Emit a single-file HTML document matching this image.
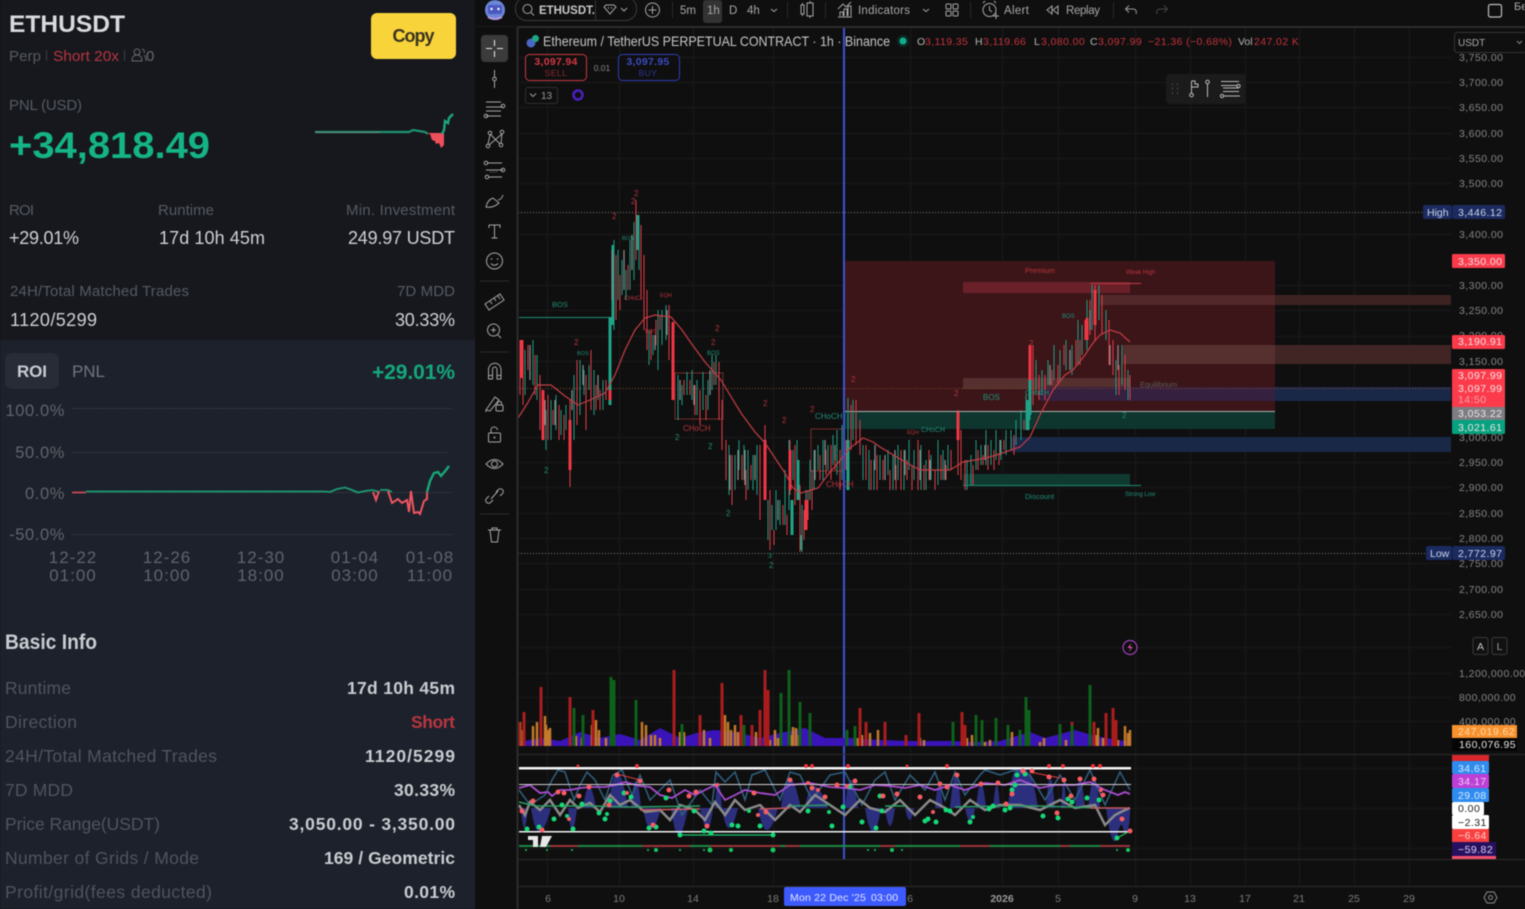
<!DOCTYPE html>
<html lang="en">
<head>
<meta charset="utf-8">
<title>ETHUSDT</title>
<style>
html,body{margin:0;padding:0;background:#0f0f0f;width:1525px;height:909px;overflow:hidden}
svg{display:block;position:absolute;left:0;top:0;filter:blur(.4px)}
text{font-family:"Liberation Sans","Noto Sans CJK SC",sans-serif}
.m{fill:#555a63;font-size:15px}
.v{fill:#cdd0d4;font-size:18px}
.lb{fill:#4f545d;font-size:17.5px}
.bv{fill:#c9ccd0;font-size:17.5px;font-weight:700;text-anchor:end}
.ax{fill:#5f646c;font-size:16.5px;text-anchor:end;letter-spacing:.6px}
.dt{fill:#5f646c;font-size:17px;text-anchor:middle;letter-spacing:1px}
.tb{fill:#a8a8a8;font-size:11.5px}
.p{fill:#858585;font-size:10.5px;letter-spacing:.45px}
.tg{fill:#f2e4e4;font-size:10.5px;letter-spacing:.45px}
.r{fill:#c4323c;font-size:10.5px;letter-spacing:.4px}
.k{fill:#b5b5b5;font-size:10.5px}
.x{fill:#7d7d7d;font-size:10.5px;text-anchor:middle}
.ic{fill:none;stroke:#a6a6a6;stroke-width:1}
.g{fill:#1f8f79}
.d{fill:#b9343d}
</style>
</head>
<body>
<svg width="1525" height="909" viewBox="0 0 1525 909" xmlns="http://www.w3.org/2000/svg">
<rect width="1525" height="909" fill="#0f0f0f"/>

<!-- LEFT PANEL -->
<rect x="0" y="0" width="475" height="340" fill="#16181d"/>
<rect x="0" y="340" width="475" height="569" fill="#1c212b"/>
<text x="9" y="32" fill="#d8dadd" font-size="24" font-weight="700" textLength="116" lengthAdjust="spacingAndGlyphs">ETHUSDT</text>
<text x="9" y="61" class="m" textLength="32">Perp</text>
<rect x="46" y="50" width="1" height="11" fill="#3a3d44"/>
<text x="53" y="61" fill="#b93540" font-size="15" textLength="66" lengthAdjust="spacingAndGlyphs">Short 20x</text>
<rect x="124" y="50" width="1" height="11" fill="#3a3d44"/>
<circle cx="137" cy="52" r="3" fill="none" stroke="#666a72"/>
<path d="M132 61c0-4 2-6 5-6s5 2 5 6zM142 49c2 .5 3 2 2 4M144 55c1.500 1 2 3 2 6" fill="none" stroke="#666a72"/>
<text x="146" y="61" class="m" style="fill:#666a72">0</text>
<rect x="371" y="13" width="85" height="46" rx="6" fill="#f8d33a"/>
<text x="413.500" y="42" fill="#3a3320" font-size="18" font-weight="700" text-anchor="middle" textLength="42">Copy</text>

<text x="9" y="110" class="m" textLength="73">PNL (USD)</text>
<text x="9" y="158" fill="#14b486" font-size="37" font-weight="700" textLength="201" lengthAdjust="spacingAndGlyphs">+34,818.49</text>
<path d="M315 132H409L413 130L419 131L425 132L428 134" fill="none" stroke="#1d9470" stroke-width="2.200"/>
<path d="M315 132.500H380" fill="none" stroke="#888" stroke-width=".8"/>
<path d="M426 133L430 134L432 140L435 141L436 144L439 143L441 148L444 145V133z" fill="#ef4f5a"/>
<path d="M442 134L444 130L445 121L448 123L449 118L453 114" fill="none" stroke="#1da67d" stroke-width="2.400"/>

<text x="9" y="215" class="m" textLength="25">ROI</text>
<text x="158" y="215" class="m" textLength="56">Runtime</text>
<text x="455" y="215" class="m" text-anchor="end" textLength="109">Min. Investment</text>
<text x="9" y="244" class="v" textLength="70">+29.01%</text>
<text x="159" y="244" class="v" textLength="106">17d 10h 45m</text>
<text x="455" y="244" class="v" text-anchor="end" textLength="107">249.97 USDT</text>
<text x="10" y="296" class="m" textLength="179">24H/Total Matched Trades</text>
<text x="455" y="296" class="m" text-anchor="end" textLength="58">7D MDD</text>
<text x="10" y="326" class="v" textLength="87">1120/5299</text>
<text x="455" y="326" class="v" text-anchor="end" textLength="60">30.33%</text>

<rect x="5" y="353" width="54" height="36" rx="7" fill="#272c36"/>
<text x="17" y="377" fill="#c8ccd2" font-size="17" font-weight="700" textLength="30">ROI</text>
<text x="72" y="377" fill="#70757e" font-size="17" textLength="33">PNL</text>
<text x="455" y="379" fill="#14a87c" font-size="21" font-weight="700" text-anchor="end" textLength="83">+29.01%</text>

<g stroke="#353a44" stroke-width="1" stroke-dasharray="2 1">
<path d="M72 408.500H452M72 452.500H448M72 492.500H452M72 534.500H452"/>
</g>
<text class="ax" x="65" y="416">100.0%</text>
<text class="ax" x="65" y="458">50.0%</text>
<text class="ax" x="65" y="499">0.0%</text>
<text class="ax" x="65" y="540">-50.0%</text>
<text class="dt" x="73" y="563">12-22</text><text class="dt" x="73" y="581">01:00</text>
<text class="dt" x="167" y="563">12-26</text><text class="dt" x="167" y="581">10:00</text>
<text class="dt" x="261" y="563">12-30</text><text class="dt" x="261" y="581">18:00</text>
<text class="dt" x="355" y="563">01-04</text><text class="dt" x="355" y="581">03:00</text>
<text class="dt" x="430" y="563">01-08</text><text class="dt" x="430" y="581">11:00</text>
<path d="M72 492.500H86" stroke="#d8505a" stroke-width="1.600" fill="none"/>
<path d="M86 491.500H325L330 492L337 489L345 487.500L352 490L358 492.500L365 491L372 490L378 491.500M380 490L388 490L392 492" fill="none" stroke="#1d9a74" stroke-width="1.800"/>
<path d="M373 492L376 500L379 491M388 491L392 503L398 499L402 503L407 500L409 512L411 491L414 513L418 512L420 514L424 501L427 499V492" fill="none" stroke="#ee5560" stroke-width="2"/>
<path d="M427 492L430 481L434 473L438 472L441 476L446 470L449 466" fill="none" stroke="#1aa679" stroke-width="2.400"/>

<text x="5" y="649" fill="#c9cdd2" font-size="21" font-weight="700" textLength="92" lengthAdjust="spacingAndGlyphs">Basic Info</text>
<text class="lb" x="5" y="694" textLength="66">Runtime</text>
<text class="lb" x="5" y="728" textLength="72">Direction</text>
<text class="lb" x="5" y="762" textLength="212">24H/Total Matched Trades</text>
<text class="lb" x="5" y="796" textLength="68">7D MDD</text>
<text class="lb" x="5" y="830" textLength="155">Price Range(USDT)</text>
<text class="lb" x="5" y="864" textLength="194">Number of Grids / Mode</text>
<text class="lb" x="5" y="898" textLength="207">Profit/grid(fees deducted)</text>
<text class="bv" x="455" y="694" textLength="108">17d 10h 45m</text>
<text class="bv" x="455" y="728" style="fill:#b93540" textLength="44">Short</text>
<text class="bv" x="455" y="762" textLength="90">1120/5299</text>
<text class="bv" x="455" y="796" textLength="61">30.33%</text>
<text class="bv" x="455" y="830" textLength="166">3,050.00 - 3,350.00</text>
<text class="bv" x="455" y="864" textLength="131">169 / Geometric</text>
<text class="bv" x="455" y="898" textLength="51">0.01%</text>

<!-- GRID -->
<g stroke="#1a1a1a" stroke-width="1" fill="none">
<path d="M547.500 28V886M619.500 28V886M693.500 28V886M773.500 28V886M910.500 28V886M1002.500 28V886M1058.500 28V886M1135.500 28V886M1190.500 28V886M1245.500 28V886M1299.500 28V886M1354.500 28V886M1409.500 28V886"/>
<path d="M518 57.500H1451M518 82.500H1451M518 107.500H1451M518 133.500H1451M518 158.500H1451M518 183.500H1451M518 234.500H1451M518 285.500H1451M518 310.500H1451M518 336.500H1451M518 361.500H1451M518 437.500H1451M518 462.500H1451M518 487.500H1451M518 513.500H1451M518 538.500H1451M518 563.500H1451M518 589.500H1451M518 614.500H1451M518 647.500H1451M518 673.500H1451M518 697.500H1451M518 721.500H1451M518 768.500H1451M518 808.500H1451M518 848.500H1451"/>
</g>

<!-- ZONES -->
<rect x="844" y="261" width="431" height="151" fill="#3b1518"/>
<rect x="844" y="412" width="431" height="17" fill="#0e352e"/>
<rect x="963" y="282" width="167" height="11" fill="#6a2029"/>
<rect x="1100" y="295" width="175" height="10" fill="#53282a"/>
<rect x="1275" y="295" width="176" height="10" fill="#3d2222"/>
<rect x="1123" y="345" width="152" height="19" fill="#56302f"/>
<rect x="1275" y="345" width="176" height="19" fill="#402524"/>
<rect x="963" y="378" width="167" height="11" fill="#55302f"/>
<rect x="1040" y="387" width="235" height="14" fill="#35203f"/>
<rect x="1275" y="387" width="176" height="14" fill="#1a2848"/>
<rect x="1011" y="437" width="440" height="15" fill="#1a2848"/>
<rect x="963" y="474" width="167" height="11" fill="#103a30"/>
<path d="M844 411.500H1275" stroke="#a6b4b0" stroke-width="1"/>
<path d="M1090 283.500H1141" stroke="#c93a44" stroke-width="1"/>
<path d="M963 485.500H1141" stroke="#1c8f78" stroke-width="1"/>
<path d="M518 212.500H1423M518 553.500H1427" stroke="#777" stroke-width="1" stroke-dasharray="1 2"/>
<path d="M518 388.500H1451" stroke="#8c4a30" stroke-width="1" stroke-dasharray="1 2"/>
<path d="M519 317.500H610" stroke="#1c8f78" stroke-width="1"/>
<rect x="675" y="373" width="48" height="46" fill="none" stroke="#a33a3f" stroke-width=".7"/>
<rect x="811" y="429" width="33" height="42" fill="none" stroke="#a33a3f" stroke-width=".7"/>

<!-- CANDLES teal -->
<path fill="none" stroke="#1f9c82" stroke-width="1" d="M525 350V395M533 340V385M537 355V400M542 395V420M546 410V450M551 400V440M556 395V430M561 410V435M566 405V430M574 375V440M580 360V415M584 370V395M589 365V390M594 370V415M598 375V400M603 380V410M614 240V330M618 250V300M622 260V295M626 270V300M630 240V290M634 222V280M639 215V270M649 330V365M653 335V355M658 310V370M662 310V345M666 305V340M678 375V420M682 385V405M687 372V395M692 370V400M697 380V415M703 372V410M708 380V410M712 355V390M716 355V385M729 445V495M735 455V490M739 440V470M744 445V480M748 450V490M753 455V490M757 445V495M768 500V540M772 505V530M776 490V530M780 500V525M785 470V525M789 440V510M793 450V480M797 440V500M802 505V552M806 490V530M810 460V500M814 450V490M818 445V470M823 440V480M828 445V470M833 435V465M837 430V475M842 425V480M848 398V445M853 400V440M863 445V480M869 450V490M874 460V490M880 455V480M888 450V475M893 455V490M898 445V480M904 450V490M909 440V470M914 450V480M921 445V490M926 460V490M931 455V480M938 440V485M943 450V480M948 445V470M967 460V490M971 455V485M976 440V470M981 445V465M986 430V465M991 440V465M996 430V460M1001 440V460M1006 430V455M1011 430V450M1016 420V445M1021 410V440M1026 395V430M1030 368V420M1036 360V395M1042 370V395M1048 360V385M1054 345V380M1060 350V380M1066 340V370M1072 345V375M1078 320V365M1082 325V355M1087 300V350M1092 285V330M1099 285V320M1106 310V340M1116 360V395M1122 345V385M1128 370V400"/>
<path fill="none" stroke="#1fa387" stroke-width="3" d="M610 317V405M613 245V325M637 215V250M792 500V535M848 440V490M1028 400V430M1030 380V415M798 460V500M801 535V550"/>
<!-- CANDLES red -->
<path fill="none" stroke="#e23b49" stroke-width="1" d="M520 340V395M523 360V405M528 345V370M535 355V395M540 375V430M548 395V440M553 410V425M559 405V440M564 415V440M570 400V487M577 360V425M586 375V430M591 350V410M596 385V410M600 390V410M606 380V400M616 255V320M620 275V310M628 265V290M636 200V260M641 225V300M644 255V330M647 290V350M651 330V360M656 320V345M660 315V330M669 305V360M672 330V370M684 380V395M690 380V395M695 385V415M700 390V425M706 395V420M714 362V385M719 362V420M722 400V450M726 440V480M732 455V505M742 455V480M746 470V500M751 465V480M760 445V520M765 425V470M770 490V550M774 530V545M783 505V525M787 515V535M790 440V495M795 445V505M800 485V552M804 510V540M808 490V520M812 470V510M820 455V480M826 450V475M831 445V480M835 445V470M840 450V490M846 440V470M851 405V450M856 400V445M860 420V455M866 445V480M871 460V490M877 455V490M883 460V480M890 470V490M896 465V490M901 450V490M907 460V480M912 465V490M918 440V490M924 465V490M929 450V480M935 470V490M941 455V480M946 465V480M951 450V470M958 410V475M961 430V480M965 460V490M973 465V485M978 450V470M983 455V465M988 445V470M994 450V470M999 455V465M1004 440V450M1014 435V455M1024 420V430M1033 345V405M1039 375V400M1045 375V400M1052 370V385M1058 365V385M1064 345V365M1070 355V365M1076 340V365M1080 340V365M1085 320V340M1090 300V335M1095 285V340M1102 295V335M1109 320V365M1113 340V375M1119 365V395M1125 355V390M1130 375V400"/>
<path fill="none" stroke="#f23645" stroke-width="3" d="M673 322V400M610 390V400M522 340V378M543 390V440M570 420V470M765 440V500M790 450V490M806 500V530M958 412V440M1095 290V325M1030 345V380M1087 318V340"/>
<!-- grey candles -->
<path fill="none" stroke="#8e8e8e" stroke-width="1.200" d="M530 345V380M545 400V425M555 400V425M572 390V410M583 365V385M598 375V395M612 250V300M624 250V290M632 235V270M655 335V350M667 310V335M680 380V400M694 385V405M710 370V395M730 455V490M738 450V480M745 450V485M755 455V480M778 500V520M815 450V480M825 440V465M835 445V460M875 445V470M885 455V480M895 450V480M905 450V475M920 450V480M930 460V480M945 460V480M985 445V460M1000 440V455M1050 365V385M1070 350V370M1090 310V330M1110 345V365M1118 345V370"/>
<!-- MA -->
<path fill="none" stroke="#c63d46" stroke-width="1.200" d="M518 418L527 404L538 385L551 385L565 396L578 405L590 400L605 393L615 375L625 350L635 330L645 318L655 315L671 317L682 330L691 343L705 362L721 380L730 395L741 413L755 432L765 443L775 458L785 473L793 488L801 493L818 488L830 472L838 463L850 448L863 438L873 442L880 447L895 456L907 463L920 470L930 470L950 470L963 462L975 460L990 457L1005 452L1020 447L1030 437L1040 415L1053 390L1065 375L1073 370L1085 355L1093 343L1100 335L1110 330L1120 333L1130 342"/>

<!-- chart labels -->
<g font-size="7" class="g">
<text x="552" y="307" font-size="7.500">BOS</text><text x="815" y="419" font-size="8">CHoCH</text><text x="921" y="432" font-size="7">CHoCH</text><text x="983" y="400" font-size="8">BOS</text>
<text x="1025" y="499" font-size="7.500">Discount</text><text x="1125" y="496" font-size="6">Strong Low</text>
<text x="544" y="473" font-size="8">2</text><text x="675" y="440" font-size="8">2</text><text x="708" y="449" font-size="8">2</text><text x="726" y="516" font-size="8">2</text><text x="768" y="558" font-size="7">3</text><text x="769" y="568" font-size="8">2</text><text x="1122" y="418" font-size="8">2</text><text x="1025" y="395" font-size="7">CHoCH</text><text x="1062" y="318" font-size="6">BOS</text>
<text x="622" y="240" font-size="5.500">BOS</text><text x="707" y="355" font-size="6">BOS</text><text x="577" y="355" font-size="5.500">BOS</text>
</g>
<g class="d" font-size="7">
<text x="1025" y="273" font-size="7.500">Premium</text><text x="1126" y="274" font-size="6">Weak High</text>
<text x="683" y="431" font-size="8">CHoCH</text><text x="826" y="487" font-size="8">CHoCH</text>
<text x="612" y="219" font-size="8">2</text><text x="631" y="204" font-size="8">2</text><text x="634" y="196" font-size="8">2</text><text x="574" y="345" font-size="8">2</text><text x="715" y="331" font-size="8">2</text><text x="711" y="345" font-size="8">2</text><text x="763" y="406" font-size="8">2</text><text x="782" y="423" font-size="8">2</text><text x="810" y="412" font-size="8">2</text><text x="851" y="382" font-size="8">2</text><text x="954" y="396" font-size="8">2</text><text x="1029" y="346" font-size="8">2</text><text x="624" y="300" font-size="6">CHoCH</text><text x="660" y="297" font-size="5.500">EQH</text><text x="907" y="434" font-size="5.500">EQH</text><text x="645" y="333" font-size="5.500">BOS</text>
</g>
<text x="1140" y="387" fill="#5e5e5e" font-size="7.500">Equilibrium</text>

<!-- crosshair -->
<rect x="843" y="27" width="2" height="832" fill="#3d52d5"/>

<!-- volume -->
<path fill="#3a14b8" d="M519 746V742L540 738L560 741L580 732L600 738L620 734L640 740L660 728L680 738L700 732L715 730L740 733L760 738L780 733L805 728L825 738L850 738L880 740L910 741L950 741L975 742L1000 741L1030 732L1045 738L1075 730L1095 736L1130 742V746Z"/>
<path fill="none" stroke="#c47a28" stroke-width="2.500" d="M520 746V722M523 746V730M533 746V726M537 746V722M545 746V716M548 746V730M546 746V725M550 746V728M576 746V736M582 746V738M592 746V725M596 746V720M599 746V730M606 746V738M642 746V722M646 746V725M651 746V735M655 746V735M660 746V738M680 746V732M682 746V738M684 746V732M700 746V735M704 746V730M710 746V738M725 746V715M728 746V722M731 746V730M735 746V725M738 746V732M756 746V732M760 746V736M767 746V730M770 746V740M775 746V730M778 746V738M792 746V735M793 746V727M796 746V728M799 746V735M855 746V740M858 746V738M862 746V735M870 746V733M878 746V730M885 746V742M920 746V738M924 746V740M964 746V730M967 746V738M972 746V735M985 746V742M990 746V740M1012 746V732M1040 746V742M1044 746V738M1060 746V738M1066 746V740M1096 746V735M1098 746V728M1103 746V738M1116 746V730M1118 746V740M1125 746V726M1128 746V733M1130 746V730"/>
<path fill="none" stroke="#aa1c1c" stroke-width="3" d="M519 746V722M524 746V712M541 746V687M570 746V697M593 746V710M674 746V670M700 746V715M722 746V683M752 746V725M765 746V670M768 746V690M741 746V715M760 746V710M860 746V708M866 746V722M885 746V722M906 746V735M919 746V713M962 746V712M965 746V725M1072 746V722M1094 746V722M1106 746V713M1113 746V708M1116 746V720"/>
<path fill="none" stroke="#0e611b" stroke-width="3" d="M611 746V677M614 746V680M636 746V700M574 746V708M583 746V715M682 746V724M744 746V725M781 746V693M789 746V670M800 746V702M810 746V713M847 746V730M855 746V726M953 746V722M976 746V715M982 746V720M996 746V718M1008 746V725M1020 746V730M1026 746V697M1029 746V710M1060 746V724M1072 746V725M1090 746V685"/>
<path d="M518 754.500H1525M518 859.500H1525M518 886.500H1525" stroke="#2c2c2c" fill="none"/>

<!-- oscillator -->
<path fill="#2b2f7e" d="M521 808Q524 848 528 808ZM531 808Q538 856 551 808ZM568 808Q572 852 577 808ZM583 808Q589 766 596 808ZM608 808Q617 738 628 808ZM631 808Q636 752 641 808ZM643 808Q650 850 661 808ZM671 808Q678 862 688 808ZM700 808Q708 850 713 808ZM715 808Q718 756 722 808ZM722 808Q728 848 738 808ZM758 808Q766 852 778 808ZM781 808Q788 748 801 808ZM805 808Q812 764 828 808ZM845 808Q850 752 858 808ZM865 808Q873 856 881 808ZM885 808Q890 844 895 808ZM905 808Q910 832 914 808ZM935 808Q939 762 943 808ZM950 808Q956 742 961 808ZM965 808Q971 836 975 808ZM976 808Q981 758 986 808ZM993 808Q997 762 1000 808ZM1008 808Q1012 762 1020 768Q1032 764 1038 808ZM1046 808Q1050 748 1055 808ZM1061 808Q1064 756 1066 808ZM1075 808Q1080 752 1085 808ZM1088 808Q1094 752 1100 808ZM1106 808Q1112 852 1117 838Q1121 815 1124 832Q1130 835 1130 808Z"/>
<path fill="none" stroke="#305f80" stroke-width="1.500" d="M519 790L530 805L545 795L552 780L558 770L565 772L574 800L580 785L587 772L595 780L605 800L613 775L622 770L632 795L640 775L650 800L660 790L670 780L682 815L700 790L712 805L716 772L725 782L735 772L745 800L752 775L765 770L780 800L790 772L800 775L812 800L830 775L845 772L862 805L875 780L885 772L895 800L910 775L925 790L935 772L945 800L955 772L965 795L980 775L985 770L1000 775L1015 770L1030 775L1045 800L1060 775L1075 800L1090 770L1105 805L1120 772L1130 790"/>
<path fill="none" stroke="#8a8a8a" stroke-width="2.500" d="M519 805L525 815L530 802L540 810L550 800L560 815L570 800L578 808L590 803L600 812L610 795L620 805L630 800L645 812L660 810L670 820L680 805L695 810L705 820L715 802L725 815L735 800L745 810L760 805L775 820L790 805L800 812L815 795L830 805L845 815L860 800L870 808L885 812L900 800L915 815L930 800L945 808L955 815L970 800L985 810L1000 805L1020 805L1040 810L1060 800L1075 808L1095 805L1105 825L1115 815L1125 810L1130 808"/>
<path fill="none" stroke="#2b9c63" stroke-width="1.500" d="M519 802L535 806L560 806L590 806L630 807L700 806M790 806L830 805M885 806L905 806M955 807L1000 806L1040 806L1100 808"/>
<path fill="none" stroke="#c65a5e" stroke-width="1.500" d="M640 810L700 809M760 809L790 808M1090 808L1130 808"/>
<path fill="none" stroke="#a84cd0" stroke-width="1.800" d="M519 788L530 785L540 793L548 792L552 796L560 790L570 790L580 788L590 787L605 787L615 785L625 782L640 786L650 787L660 795L672 798L685 790L695 795L705 790L715 785L725 800L735 795L745 790L760 793L775 795L790 785L810 783L830 787L845 788L860 790L875 785L890 786L905 788L920 785L935 790L950 785L965 790L985 783L1005 785L1020 780L1040 788L1055 785L1075 785L1090 782L1105 790L1118 795L1125 792L1130 794"/>
<rect x="519" y="767" width="612" height="2.500" fill="#f5f5f5"/>
<rect x="519" y="784" width="612" height="1" fill="#cfcfcf"/>
<rect x="519" y="831" width="612" height="1.500" fill="#f0f0f0"/>
<path d="M519 846H550M578 846H642M690 846H710M780 846H785M800 846H880M895 846H960M990 846H1060M1070 846H1100" stroke="#1b8a43" stroke-width="2"/>
<path d="M550 846H578M642 846H690M710 846H780M785 846H800M880 846H895M960 846H990M1060 846H1070M1100 846H1130" stroke="#9c3338" stroke-width="2"/>
<path d="M617 774L640 780M1030 772L1060 778" stroke="#e43d44" fill="none" stroke-width="1"/>
<path d="M680 835L773 835M1117 838L1130 831" stroke="#1fc56f" fill="none" stroke-width="1.200"/>
<!-- oscillator dots -->
<g fill="#16d977">
<circle cx="527" cy="829" r="2.500"/><circle cx="539" cy="827" r="2.500"/><circle cx="554" cy="819" r="2.500"/><circle cx="562" cy="805" r="2.500"/><circle cx="567" cy="816" r="2"/><circle cx="573" cy="829" r="2.500"/><circle cx="582" cy="804" r="2.500"/><circle cx="599" cy="813" r="2.500"/><circle cx="605" cy="819" r="2.500"/><circle cx="607" cy="814" r="2"/><circle cx="610" cy="801" r="2.500"/><circle cx="624" cy="793" r="2.500"/><circle cx="631" cy="797" r="2.500"/><circle cx="649" cy="828" r="2.500"/><circle cx="656" cy="827" r="2.500"/><circle cx="666" cy="798" r="2.500"/><circle cx="680" cy="835" r="2.500"/><circle cx="694" cy="811" r="2.500"/><circle cx="704" cy="831" r="2.500"/><circle cx="711" cy="833" r="2.500"/><circle cx="732" cy="825" r="2.500"/><circle cx="738" cy="826" r="2.500"/><circle cx="749" cy="811" r="2"/><circle cx="760" cy="826" r="2.500"/><circle cx="773" cy="835" r="2.500"/><circle cx="808" cy="811" r="2.500"/><circle cx="850" cy="787" r="2"/><circle cx="880" cy="796" r="2.500"/><circle cx="882" cy="811" r="2.500"/><circle cx="829" cy="812" r="2"/><circle cx="832" cy="826" r="2.500"/><circle cx="843" cy="807" r="2.500"/><circle cx="862" cy="822" r="2.500"/><circle cx="876" cy="828" r="2.500"/><circle cx="925" cy="821" r="2.500"/><circle cx="928" cy="819" r="2.500"/><circle cx="936" cy="822" r="2.500"/><circle cx="946" cy="810" r="2.500"/><circle cx="950" cy="811" r="2.500"/><circle cx="970" cy="822" r="2.500"/><circle cx="973" cy="817" r="2"/><circle cx="989" cy="809" r="2.500"/><circle cx="993" cy="806" r="2.500"/><circle cx="1005" cy="810" r="2.500"/><circle cx="1010" cy="808" r="2.500"/><circle cx="1012" cy="790" r="2.500"/><circle cx="1015" cy="785" r="2.500"/><circle cx="1017" cy="775" r="2.500"/><circle cx="1025" cy="774" r="2.500"/><circle cx="1043" cy="816" r="2.500"/><circle cx="1058" cy="818" r="2.500"/><circle cx="1068" cy="799" r="2.500"/><circle cx="1072" cy="802" r="2.500"/><circle cx="1087" cy="798" r="2.500"/><circle cx="1099" cy="800" r="2.500"/><circle cx="1117" cy="838" r="2.500"/>
</g>
<g fill="#f85c63">
<circle cx="522" cy="811" r="2.500"/><circle cx="533" cy="801" r="2.500"/><circle cx="542" cy="830" r="2.500"/><circle cx="558" cy="792" r="2.500"/><circle cx="564" cy="793" r="2.500"/><circle cx="569" cy="819" r="2"/><circle cx="579" cy="796" r="2.500"/><circle cx="589" cy="787" r="2.500"/><circle cx="609" cy="805" r="2.500"/><circle cx="617" cy="775" r="2.500"/><circle cx="627" cy="793" r="2"/><circle cx="640" cy="781" r="2.500"/><circle cx="653" cy="825" r="2.500"/><circle cx="669" cy="790" r="2.500"/><circle cx="689" cy="796" r="2.500"/><circle cx="696" cy="792" r="2.500"/><circle cx="707" cy="826" r="2.500"/><circle cx="717" cy="785" r="2"/><circle cx="754" cy="793" r="2.500"/><circle cx="758" cy="815" r="2"/><circle cx="766" cy="812" r="2.500"/><circle cx="790" cy="780" r="2.500"/><circle cx="808" cy="783" r="2"/><circle cx="812" cy="788" r="2.500"/><circle cx="818" cy="790" r="2"/><circle cx="825" cy="797" r="2.500"/><circle cx="837" cy="785" r="2.500"/><circle cx="847" cy="786" r="2"/><circle cx="855" cy="781" r="2.500"/><circle cx="883" cy="796" r="2.500"/><circle cx="897" cy="794" r="2.500"/><circle cx="920" cy="797" r="2.500"/><circle cx="933" cy="812" r="2"/><circle cx="940" cy="784" r="2.500"/><circle cx="947" cy="787" r="2.500"/><circle cx="957" cy="775" r="2.500"/><circle cx="981" cy="784" r="2.500"/><circle cx="998" cy="783" r="2.500"/><circle cx="1012" cy="794" r="2.500"/><circle cx="1006" cy="804" r="2.500"/><circle cx="1023" cy="771" r="2.500"/><circle cx="1032" cy="771" r="2.500"/><circle cx="1049" cy="777" r="2.500"/><circle cx="1064" cy="780" r="2.500"/><circle cx="1080" cy="779" r="2.500"/><circle cx="1094" cy="779" r="2.500"/><circle cx="1101" cy="790" r="2"/><circle cx="1103" cy="795" r="2.500"/><circle cx="1071" cy="796" r="2.500"/><circle cx="1057" cy="813" r="2.500"/><circle cx="1122" cy="819" r="2.500"/><circle cx="1130" cy="831" r="2.500"/>
</g>
<g fill="#f03238">
<circle cx="578" cy="766" r="1.500"/><circle cx="637" cy="766" r="2"/><circle cx="806" cy="766" r="2"/><circle cx="812" cy="766" r="2"/><circle cx="848" cy="766" r="2"/><circle cx="907" cy="766" r="1.500"/><circle cx="947" cy="766" r="2"/><circle cx="1049" cy="766" r="2"/><circle cx="1063" cy="766" r="2"/><circle cx="1093" cy="766" r="2"/><circle cx="1100" cy="766" r="2"/>
</g>
<g fill="#14c85f">
<circle cx="526" cy="850" r="1"/><circle cx="547" cy="850" r="1"/><circle cx="572" cy="850" r="1"/><circle cx="648" cy="850" r="1"/><circle cx="656" cy="850" r="2"/><circle cx="680" cy="850" r="1"/><circle cx="704" cy="850" r="1"/><circle cx="710" cy="850" r="2.500"/><circle cx="731" cy="850" r="2"/><circle cx="773" cy="850" r="2.500"/><circle cx="868" cy="850" r="1"/><circle cx="875" cy="850" r="1"/><circle cx="892" cy="850" r="2"/><circle cx="902" cy="850" r="1"/><circle cx="1117" cy="850" r="1"/><circle cx="1128" cy="850" r="2"/>
</g>
<!-- TV logo -->
<path fill="#e8e8e8" d="M528 836H538V847H533V840H528ZM542 836H552L546 847H540Z"/>

<!-- Right axis -->
<rect x="1451" y="28" width="74" height="726" fill="#0f0f0f"/>
<rect x="1451" y="755" width="74" height="104" fill="#0f0f0f"/>
<rect x="1451" y="860" width="74" height="26" fill="#0f0f0f"/>
<text class="p" x="1459" y="61">3,750.00</text><text class="p" x="1459" y="86">3,700.00</text><text class="p" x="1459" y="111">3,650.00</text><text class="p" x="1459" y="137">3,600.00</text><text class="p" x="1459" y="162">3,550.00</text><text class="p" x="1459" y="187">3,500.00</text><text class="p" x="1459" y="238">3,400.00</text><text class="p" x="1459" y="289">3,300.00</text><text class="p" x="1459" y="314">3,250.00</text><text class="p" x="1459" y="339">3,200.00</text><text class="p" x="1459" y="365">3,150.00</text><text class="p" x="1459" y="441">3,000.00</text><text class="p" x="1459" y="466">2,950.00</text><text class="p" x="1459" y="491">2,900.00</text><text class="p" x="1459" y="517">2,850.00</text><text class="p" x="1459" y="542">2,800.00</text><text class="p" x="1459" y="567">2,750.00</text><text class="p" x="1459" y="593">2,700.00</text><text class="p" x="1459" y="618">2,650.00</text>
<text class="p" x="1459" y="677">1,200,000.00</text><text class="p" x="1459" y="701">800,000.00</text><text class="p" x="1459" y="725">400,000.00</text>
<rect x="1423" y="205" width="29" height="14" rx="2" fill="#1b2b60"/><rect x="1452.500" y="205" width="52.500" height="14" rx="2" fill="#1b2b60"/>
<text x="1427" y="216" fill="#ccd4ea" font-size="10.500">High</text><text x="1458" y="216" fill="#ccd4ea" font-size="10.500" letter-spacing=".45">3,446.12</text>
<rect x="1426" y="546" width="26" height="14" rx="2" fill="#1b2b60"/><rect x="1452.500" y="546" width="52.500" height="14" rx="2" fill="#1b2b60"/>
<text x="1430" y="557" fill="#ccd4ea" font-size="10.500">Low</text><text x="1458" y="557" fill="#ccd4ea" font-size="10.500" letter-spacing=".45">2,772.97</text>
<g fill="#fb3b4c">
<rect x="1452" y="254" width="53" height="14" rx="1.500"/><rect x="1452" y="335" width="53" height="14" rx="1.500"/><rect x="1452" y="369" width="53" height="39" rx="1.500"/>
</g>
<rect x="1452" y="407" width="53" height="14" fill="#7c7e84"/>
<rect x="1452" y="420" width="53" height="14" rx="1.500" fill="#06a27f"/>
<text class="tg" x="1458" y="265">3,350.00</text><text class="tg" x="1458" y="345">3,190.91</text><text class="tg" x="1458" y="379">3,097.99</text><text class="tg" x="1458" y="392">3,097.99</text><text x="1458" y="403" fill="#f4a3aa" font-size="10.500" letter-spacing=".45">14:50</text><text class="tg" x="1458" y="417">3,053.22</text><text class="tg" x="1458" y="431">3,021.61</text>
<rect x="1473" y="637.500" width="15" height="17" rx="2" fill="#111" stroke="#3a3a3a"/><rect x="1492" y="637.500" width="15" height="17" rx="2" fill="#111" stroke="#3a3a3a"/>
<text x="1480.500" y="650" fill="#c4c4c4" font-size="10.500" text-anchor="middle">A</text><text x="1499.500" y="650" fill="#9a9a9a" font-size="10.500" text-anchor="middle">L</text>

<rect x="1452" y="725" width="65" height="13" fill="#f8922e"/><rect x="1452" y="738" width="65" height="13" fill="#050505"/>
<text x="1458" y="735" fill="#ffd9a8" font-size="10.500" letter-spacing=".45">247,019.62</text><text x="1459" y="748" fill="#e4e4e4" font-size="10.500" letter-spacing=".45">160,076.95</text>
<rect x="1452" y="755" width="37" height="6" fill="#d8262c"/>
<rect x="1452" y="761" width="37" height="13" rx="1.500" fill="#2f8cef"/><rect x="1452" y="774" width="37" height="14" rx="1.500" fill="#bd3fd6"/><rect x="1452" y="788" width="37" height="14" rx="1.500" fill="#2f8cef"/>
<rect x="1452" y="802" width="32" height="13" rx="1.500" fill="#fff"/><rect x="1452" y="815" width="37" height="14" rx="1.500" fill="#fff"/>
<rect x="1452" y="829" width="37" height="13" fill="#f94040"/><rect x="1452" y="842" width="44" height="14" fill="#281060"/><rect x="1452" y="856" width="44" height="3" fill="#f4506e"/>
<text x="1458" y="772" fill="#d8ecff" font-size="10.500" letter-spacing=".45">34.61</text><text x="1458" y="785" fill="#f4cdfa" font-size="10.500" letter-spacing=".45">34.17</text><text x="1458" y="799" fill="#d8ecff" font-size="10.500" letter-spacing=".45">29.08</text><text x="1458" y="812" fill="#222" font-size="10.500" letter-spacing=".45">0.00</text><text x="1458" y="826" fill="#222" font-size="10.500" letter-spacing=".45">−2.31</text><text x="1458" y="839" fill="#ffd0d0" font-size="10.500" letter-spacing=".45">−6.64</text><text x="1458" y="853" fill="#dcd4f4" font-size="10.500" letter-spacing=".45">−59.82</text>

<!-- bottom axis -->
<text class="x" x="548" y="902">6</text><text class="x" x="619" y="902">10</text><text class="x" x="693" y="902">14</text><text class="x" x="773" y="902">18</text><text class="x" x="910" y="902">6</text><text class="x" x="1002" y="902" font-weight="700" style="fill:#9a9a9a">2026</text><text class="x" x="1058" y="902">5</text><text class="x" x="1135" y="902">9</text><text class="x" x="1190" y="902">13</text><text class="x" x="1245" y="902">17</text><text class="x" x="1299" y="902">21</text><text class="x" x="1354" y="902">25</text><text class="x" x="1409" y="902">29</text>
<rect x="784" y="887" width="122" height="19" rx="2" fill="#3d5afe"/>
<text x="790" y="901" fill="#e2e6ff" font-size="10.500" letter-spacing=".2">Mon 22 Dec '25</text><text x="871" y="901" fill="#e2e6ff" font-size="10.500" letter-spacing=".2">03:00</text>
<path d="M1487 892H1494L1497 897.500L1494 903H1487L1484 897.500Z" fill="none" stroke="#8a8a8a"/><circle cx="1490.500" cy="897.500" r="2" fill="none" stroke="#8a8a8a"/>

<!-- lightning -->
<circle cx="1130" cy="647.500" r="7" fill="#0f0f0f" stroke="#9c3fb8" stroke-width="1.200"/><path d="M1131 643L1127.500 648H1130.500L1129 652L1132.800 646.800H1130Z" fill="#d04fa0"/>

<!-- legend -->
<circle cx="531" cy="43" r="4.500" fill="#4a66c8"/><circle cx="535.500" cy="38.500" r="3.500" fill="#1fa883"/>
<text x="543" y="46" fill="#c6c6c6" font-size="14" textLength="347" lengthAdjust="spacingAndGlyphs">Ethereum / TetherUS PERPETUAL CONTRACT · 1h · Binance</text>
<circle cx="903" cy="41" r="6" fill="#0d2a25"/><circle cx="903" cy="41" r="3.500" fill="#11ad8c"/>
<text class="k" x="917" y="45">O</text><text class="r" x="925" y="45">3,119.35</text>
<text class="k" x="975" y="45">H</text><text class="r" x="983" y="45">3,119.66</text>
<text class="k" x="1034" y="45">L</text><text class="r" x="1041" y="45">3,080.00</text>
<text class="k" x="1090" y="45">C</text><text class="r" x="1098" y="45">3,097.99</text>
<text class="r" x="1148" y="45">−21.36 (−0.68%)</text>
<text class="k" x="1238" y="45">Vol</text><text class="r" x="1254" y="45">247.02 K</text>
<rect x="525.500" y="54.500" width="61" height="26" rx="4" fill="#0f0f0f" stroke="#c93841"/>
<text x="556" y="65" fill="#d43742" font-size="10.500" font-weight="700" text-anchor="middle" letter-spacing=".3">3,097.94</text><text x="556" y="76" fill="#8e2a33" font-size="8.500" text-anchor="middle" letter-spacing=".5">SELL</text>
<text x="602" y="71" fill="#8a8a8a" font-size="8.500" text-anchor="middle">0.01</text>
<rect x="618.500" y="54.500" width="61" height="26" rx="4" fill="#0f0f0f" stroke="#2c3fb4"/>
<text x="648" y="65" fill="#3a4cc6" font-size="10.500" font-weight="700" text-anchor="middle" letter-spacing=".3">3,097.95</text><text x="648" y="76" fill="#2a3796" font-size="8.500" text-anchor="middle" letter-spacing=".5">BUY</text>
<rect x="525.500" y="87.500" width="32" height="16" rx="2" fill="#0f0f0f" stroke="#2e2e2e"/>
<path d="M530 93.500L533 96.500L536 93.500" fill="none" stroke="#999"/><text x="541" y="99" fill="#999" font-size="10">13</text>
<circle cx="578" cy="95" r="4.500" fill="none" stroke="#4a1fc2" stroke-width="2.500"/>

<rect x="1454.500" y="32.500" width="80" height="20" rx="3" fill="#0f0f0f" stroke="#343434"/>
<text x="1458" y="46" fill="#a8a8a8" font-size="10">USDT</text><path d="M1517 41L1519.500 43.500L1522 41" fill="none" stroke="#888"/>

<!-- floating toolbar -->
<rect x="1166" y="74" width="80" height="30" rx="4" fill="#1b1b1b"/>
<path d="M1172 84h1M1177 84h1M1172 88.500h1M1177 88.500h1M1172 93h1M1177 93h1" stroke="#4a4a4a" stroke-width="2" fill="none"/>
<path d="M1191.500 81V93M1191.500 81H1195V84H1198V87H1195M1191.500 87H1195" fill="none" stroke="#bdbdbd"/><circle cx="1191.500" cy="95" r="1.800" fill="none" stroke="#bdbdbd"/>
<circle cx="1207.500" cy="82" r="1.800" fill="none" stroke="#bdbdbd"/><path d="M1207.500 84V97" stroke="#bdbdbd"/>
<path d="M1221 81.500H1239M1221 85.500H1237M1223 91.500H1239M1224 96H1240M1223 88H1239" stroke="#bdbdbd" fill="none"/><circle cx="1238.500" cy="86" r="1.600" fill="none" stroke="#bdbdbd"/><circle cx="1222" cy="96" r="1.600" fill="none" stroke="#bdbdbd"/>

<!-- TOP BAR -->
<rect x="475" y="0" width="1050" height="26" fill="#0f0f0f"/>
<rect x="518" y="26" width="1007" height="2" fill="#2b2b2b"/>
<rect x="475" y="26" width="43" height="1" fill="#1a1a1a"/>
<circle cx="495" cy="10" r="10" fill="#6a86d8"/><rect x="488" y="5" width="14" height="9" rx="2" fill="#4a58c0"/><circle cx="491.500" cy="9" r="1.200" fill="#fff"/><circle cx="498.500" cy="9" r="1.200" fill="#fff"/><path d="M488 17Q495 21 502 17" stroke="#b898e0" fill="none" stroke-width="2"/>
<rect x="515.500" y="-3" width="121" height="23.500" rx="11" fill="#0f0f0f" stroke="#3a3a3a"/>
<circle cx="527.500" cy="9" r="4.500" class="ic"/><path d="M531 12.500L534 15.500" class="ic"/>
<text x="539" y="14" fill="#c8c8c8" font-size="11.500" font-weight="700" textLength="56" lengthAdjust="spacingAndGlyphs">ETHUSDT.</text>
<path d="M595.500 0V20" stroke="#333"/>
<path d="M604 7L606 5H614L616 7L610 14Z" class="ic"/><circle cx="608.500" cy="8" r=".7" fill="#aaa"/><circle cx="611.500" cy="8" r=".7" fill="#aaa"/>
<path d="M621 8L624 11L627 8" class="ic"/>
<circle cx="652.500" cy="10" r="7" class="ic"/><path d="M652.500 6V14M648.500 10H656.500" class="ic"/>
<path d="M672.500 2V18M787.500 2V18M825.500 2V18M970.500 2V18M1113.500 2V18" stroke="#2a2a2a"/>
<text class="tb" x="680" y="14">5m</text>
<rect x="703" y="0" width="19" height="23" rx="3" fill="#333"/><text class="tb" x="707" y="14">1h</text>
<text class="tb" x="729" y="14">D</text><text class="tb" x="747" y="14">4h</text>
<path d="M771 9L774 11.500L777 9" class="ic"/>
<rect x="801" y="5" width="3" height="9" class="ic"/><path d="M802.500 3V5M802.500 14V16" class="ic"/><rect x="807" y="3" width="6" height="13" class="ic"/><path d="M810 1V3M810 16V18" class="ic"/>
<path d="M838 17H852M840 16V12H843V16M844 16V9H847V16M848 16V6H851V16M838 9L843 4L846 7L851 2" class="ic"/>
<text class="tb" x="858" y="14" textLength="52">Indicators</text>
<path d="M923 9L926 11.500L929 9" class="ic"/>
<rect x="946" y="4" width="5" height="5" rx="1" class="ic"/><rect x="953" y="4" width="5" height="5" rx="1" class="ic"/><rect x="946" y="11" width="5" height="5" rx="1" class="ic"/><rect x="953" y="11" width="5" height="5" rx="1" class="ic"/>
<circle cx="989.500" cy="10" r="6.500" class="ic"/><path d="M989.500 6V10L992 12M983 3L985 1M996 3L994 1" class="ic"/><path d="M993 16H999M996 13V19" stroke="#a6a6a6" fill="none"/>
<text class="tb" x="1004" y="14" textLength="25">Alert</text>
<path d="M1052 6L1047 10L1052 14ZM1058 6L1053 10L1058 14Z" class="ic"/>
<text class="tb" x="1066" y="14" textLength="34">Replay</text>
<path d="M1126 9H1133C1136 9 1137 12 1136 14M1129 5.500L1125.500 9L1129 12.500" fill="none" stroke="#999"/>
<path d="M1167 9H1160C1157 9 1156 12 1157 14M1164 5.500L1167.500 9L1164 12.500" fill="none" stroke="#444"/>
<rect x="1488.500" y="4.500" width="13" height="12.500" rx="2" fill="none" stroke="#bdbdbd" stroke-width="1.200"/>
<text x="1514" y="10" fill="#a8a8a8" font-size="11">Бе</text>

<!-- LEFT TOOLBAR -->
<rect x="475" y="27" width="42" height="882" fill="#0f0f0f"/>
<rect x="516.500" y="27" width="2" height="882" fill="#2b2b2b"/>
<rect x="481" y="35" width="27" height="27" rx="4" fill="#3b3b3b"/>
<path d="M486 48.500H492M497 48.500H503M494.500 40V46M494.500 51V57" stroke="#e4e4e4" fill="none" stroke-width="1.100"/>
<path d="M494.500 70V77M494.500 81V88" class="ic"/><circle cx="494.500" cy="79" r="1.800" class="ic"/>
<path d="M486 102H501M486 107H503M486 111H501M486 116H501" class="ic"/><circle cx="503" cy="106" r="1.800" class="ic"/><circle cx="486" cy="116" r="1.800" class="ic"/>
<circle cx="490" cy="133" r="1.800" class="ic"/><circle cx="502" cy="132" r="1.800" class="ic"/><circle cx="488" cy="146" r="1.800" class="ic"/><circle cx="501" cy="145" r="1.800" class="ic"/>
<path d="M490 135L488 144M490 134L500 144M502 134L489 145M502 134L501 143" class="ic"/>
<path d="M487 163H502M486 170H503M489 177H502" class="ic"/><circle cx="486" cy="163" r="1.800" class="ic"/><circle cx="503" cy="170" r="1.800" class="ic"/><circle cx="487" cy="177" r="1.800" class="ic"/><path d="M490 172H498" stroke="#666" stroke-dasharray="1 1"/>
<path d="M486 207C487 202 490 199 493 198L499 203C496 206 491 208 486 207ZM498 200C500 200 502 198 503 195" class="ic"/>
<path d="M489 225H500V228M489 225V228M494.500 225V238M491.500 238H497.500" class="ic"/>
<circle cx="494.500" cy="261" r="8" class="ic"/><circle cx="491.500" cy="259" r=".8" fill="#a6a6a6"/><circle cx="497.500" cy="259" r=".8" fill="#a6a6a6"/><path d="M491 263.500Q494.500 267 498 263.500" class="ic"/>
<path d="M480 281H509M480 352H509M480 514H509" stroke="#2a2a2a" fill="none"/>
<path d="M485 304L500 294L504 300L489 310ZM490 301L492 304M494 298L496 301M498 296L500 299" class="ic"/>
<circle cx="493.500" cy="330" r="6" class="ic"/><path d="M493.500 327.500V332.500M491 330H496M498 335L501 338" class="ic"/>
<path d="M488.500 379V370C488.500 361 501 361 501 370V379H497V370C497 366 492.500 366 492.500 370V379ZM488.500 375.500H492.500M497 375.500H501" class="ic"/>
<path d="M486 410L495 397L499 400L490 411ZM486 410L486 412" class="ic"/><rect x="496" y="405" width="7" height="6" rx="1" class="ic"/><path d="M497.500 405V403C497.500 401 501.500 401 501.500 403V405" class="ic"/>
<rect x="488.500" y="433" width="12" height="9" rx="1" class="ic"/><path d="M491 433V430C491 426 497 426 497.500 430" class="ic"/><circle cx="494.500" cy="437.500" r="1" fill="#a6a6a6"/>
<path d="M486 464Q494.500 455 503 464Q494.500 473 486 464Z" class="ic"/><circle cx="494.500" cy="464" r="3" class="ic"/>
<path d="M489 496L486.500 498.500C484 501 488 505 490.500 502.500L493 500M496 492L498.500 489.500C501 487 505 491 502.500 493.500L500 496M491 499L498 491" class="ic"/>
<path d="M488 530H501M490 530L491.500 542H497.500L499 530M492 530V528H497V530" class="ic"/>
</svg>
</body>
</html>
